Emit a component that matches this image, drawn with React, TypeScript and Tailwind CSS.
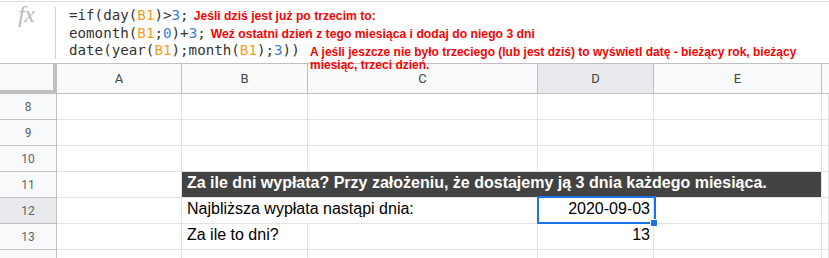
const ORANGE = 'text-[#f4a026]';
const BLUE = 'text-[#3a7ddb]';

const cols = ['A', 'B', 'C', 'D', 'E'];

function RowHead({ n, active }: { n?: number; active?: boolean }) {
  return (
    <div
      className={`flex items-center justify-center border-r border-b border-[#c0c0c0] text-[12px] text-[#5f6368] font-['Roboto',sans-serif] ${
        active ? 'bg-[#e8eaed]' : 'bg-[#f8f9fa]'
      }`}
    >
      {n}
    </div>
  );
}

function Cell({ children, right }: { children?: React.ReactNode; right?: boolean }) {
  return (
    <div
      className={`flex items-end pb-[2px] border-r border-b border-[#e2e2e2] text-[16px] text-black whitespace-nowrap overflow-visible ${
        right ? 'justify-end pr-[3px]' : 'pl-[5px]'
      }`}
    >
      {children}
    </div>
  );
}

function EmptyRow({ n }: { n?: number }) {
  return (
    <>
      <RowHead n={n} />
      <Cell />
      <Cell />
      <Cell />
      <Cell />
      <Cell />
      <Cell />
    </>
  );
}

export default function App() {
  return (
    <div className="relative w-[829px] h-[258px] overflow-hidden bg-white font-['Liberation_Sans',Arial,sans-serif]">
      {/* formula bar */}
      <div className="mt-px h-[62px] border-t border-[#dadce0] flex">
        <div className="w-[55px] flex justify-center pt-[1px]">
          <span className="font-['Liberation_Serif',serif] italic text-[23px] leading-[24px] text-[#b8b8b8] -ml-[2px]">
            fx
          </span>
        </div>
        <div className="w-px bg-[#d0d0d0] mt-[5px] h-[52px]" />
        <div className="pl-[13px] pt-[5px] font-['DejaVu_Sans_Mono',monospace] text-[14.2px] leading-[16.5px] text-[#333] whitespace-nowrap">
          <div>
            =if(day(<span className={ORANGE}>B1</span>)&gt;<span className={BLUE}>3</span>;
            <span className="ml-[5px] font-['Liberation_Sans',Arial,sans-serif] font-bold text-[12.2px] text-[#ff0000]">
              Jeśli dziś jest już po trzecim to:
            </span>
          </div>
          <div>
            eomonth(<span className={ORANGE}>B1</span>;<span className={BLUE}>0</span>)+<span className={BLUE}>3</span>;
            <span className="ml-[5px] font-['Liberation_Sans',Arial,sans-serif] font-bold text-[12.2px] text-[#ff0000]">
              Weź ostatni dzień z tego miesiąca i dodaj do niego 3 dni
            </span>
          </div>
          <div>
            date(year(<span className={ORANGE}>B1</span>);month(<span className={ORANGE}>B1</span>);
            <span className={BLUE}>3</span>))
          </div>
        </div>
      </div>

      {/* red note overlapping the header */}
      <div className="absolute left-[310px] top-[46px] z-10 font-bold text-[12px] leading-[13px] text-[#ff0000] whitespace-nowrap">
        <div>A jeśli jeszcze nie było trzeciego (lub jest dziś) to wyświetl datę - bieżący rok, bieżący</div>
        <div>miesiąc, trzeci dzień.</div>
      </div>

      {/* grid */}
      <div className="grid grid-cols-[57px_125px_126px_230px_116px_168px_1fr] grid-rows-[30px_repeat(7,26px)] border-t border-[#c0c0c0]">
        <div className="bg-[#f8f9fa] border-r-4 border-b-4 border-[#c0c0c0]" />
        {cols.map((c) => (
          <div
            key={c}
            className={`flex items-center justify-center border-r border-b border-[#c0c0c0] text-[13px] text-[#444] font-['Roboto',sans-serif] ${
              c === 'D' ? 'bg-[#e8eaed]' : 'bg-[#f8f9fa]'
            }`}
          >
            {c}
          </div>
        ))}
        <div className="bg-[#f8f9fa] border-b border-[#c0c0c0]" />

        <EmptyRow n={8} />
        <EmptyRow n={9} />
        <EmptyRow n={10} />

        <RowHead n={11} />
        <Cell />
        <div className="col-span-4 flex items-end pb-[2px] pl-[5px] bg-[#434343] border-r border-b border-[#e2e2e2] text-[16px] font-bold text-white whitespace-nowrap">
          Za ile dni wypłata? Przy założeniu, że dostajemy ją 3 dnia każdego miesiąca.
        </div>
        <Cell />

        <RowHead n={12} active />
        <Cell />
        <div className="col-span-2 flex items-end pb-[2px] pl-[5px] border-r border-b border-[#e2e2e2] text-[16px] text-black whitespace-nowrap">
          Najbliższa wypłata nastąpi dnia:
        </div>
        <Cell right>2020-09-03</Cell>
        <Cell />
        <Cell />

        <RowHead n={13} />
        <Cell />
        <Cell>Za ile to dni?</Cell>
        <Cell />
        <Cell right>13</Cell>
        <Cell />
        <Cell />

        {/* row 14 is only peeking in at the bottom edge */}
        <EmptyRow />
      </div>

      {/* selection */}
      <div className="absolute left-[537px] top-[196px] w-[119px] h-[28px] border-2 border-[#1a73e8]" />
      <div className="absolute left-[650px] top-[219px] w-[8px] h-[8px] bg-[#1a73e8] border border-white" />
    </div>
  );
}
